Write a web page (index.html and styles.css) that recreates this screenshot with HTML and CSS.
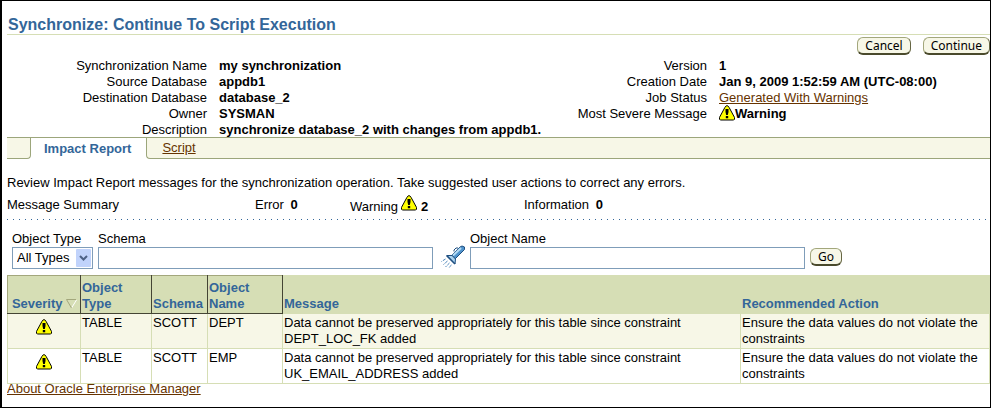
FILE: index.html
```html
<!DOCTYPE html>
<html lang="en">
<head>
    <meta charset="UTF-8">
    <meta name="viewport" content="width=device-width, initial-scale=1.0">
    <title>Synchronize: Continue To Script Execution</title>
    <link rel="stylesheet" href="styles.css">
</head>
<body>
    <svg class="symbols" aria-hidden="true">
        <symbol id="warning" viewBox="0 0 16 16">
            <path d="M7.200.8h1.600l1.400 1.800 5.300 9.800v1.800l-.8.8H1.300l-.8-.8v-1.800l5.300-9.800z" fill="#ff0" stroke="#000" stroke-width="1"/>
            <path d="M6.500 4h3v3l-.7 3H7.200l-.7-3zM6.800 11h2.400v2.200H6.800z" fill="#000"/>
        </symbol>
    </svg>

    <main class="page">
        <h1>Synchronize: Continue To Script Execution</h1>

        <div class="actions">
            <button type="button">Cancel</button>
            <button type="button">Continue</button>
        </div>

        <div class="details">
            <dl>
                <dt>Synchronization Name</dt><dd>my synchronization</dd>
                <dt>Source Database</dt><dd>appdb1</dd>
                <dt>Destination Database</dt><dd>database_2</dd>
                <dt>Owner</dt><dd>SYSMAN</dd>
                <dt>Description</dt><dd>synchronize database_2 with changes from appdb1.</dd>
            </dl>
            <dl>
                <dt>Version</dt><dd>1</dd>
                <dt>Creation Date</dt><dd>Jan 9, 2009 1:52:59 AM (UTC-08:00)</dd>
                <dt>Job Status</dt><dd><a href="#">Generated With Warnings</a></dd>
                <dt>Most Severe Message</dt><dd class="severe"><svg class="icon"><use href="#warning"/></svg>Warning</dd>
            </dl>
        </div>

        <nav class="tabs">
            <span class="edge"></span>
            <span class="active">Impact Report</span>
            <span class="rest"><a href="#">Script</a></span>
        </nav>

        <p class="intro">Review Impact Report messages for the synchronization operation. Take suggested user actions to correct any errors.</p>

        <div class="summary">
            <span>Message Summary</span>
            <span>Error <b>0</b></span>
            <span class="warnings">Warning <svg class="icon"><use href="#warning"/></svg> <b>2</b></span>
            <span>Information <b>0</b></span>
        </div>
        <hr>

        <form class="filter">
            <div class="field">
                <label for="objectType">Object Type</label>
                <div class="select">
                    <select id="objectType">
                        <option>All Types</option>
                    </select>
                    <svg class="arrow" viewBox="0 0 15 18"><path d="M4 7l3.500 3.500L11 7" fill="none" stroke="#4d6185" stroke-width="2"/></svg>
                </div>
            </div>
            <div class="field wide">
                <label for="schema">Schema</label>
                <input type="text" id="schema">
            </div>
            <button type="button" class="lookup" aria-label="Search schema">
                <svg viewBox="0 0 24 24">
                    <path d="M11 10l8-8 2-1 2.500 1v2.500L14 14z" fill="#4f93cc" stroke="#1f4f80"/>
                    <path d="M12 10.500l8-7.500" stroke="#b5dcf5" stroke-width="2"/>
                    <path d="M13 6.500V5l2-2h2" stroke="#1f4f80"/>
                    <path d="M6 10.500h5l3.500 3.500-.5 5z" fill="#a9d2ef" stroke="#1f4f80"/>
                    <path d="M5.500 10.500l8.500 8.500" stroke="#1f4f80" stroke-width="1.500"/>
                    <path d="M4.500 14l-4 2.500M6.500 16l-4 3.500M8.500 18l-4 4M10.500 20l-3 3" stroke="#4a84b8" stroke-dasharray="3 1"/>
                </svg>
            </button>
            <div class="field wide">
                <label for="objectName">Object Name</label>
                <input type="text" id="objectName">
            </div>
            <button type="button" class="go">Go</button>
        </form>

        <table>
            <colgroup>
                <col class="severity"><col class="type"><col class="schema"><col class="name"><col><col class="action">
            </colgroup>
            <thead>
                <tr>
                    <th class="sort center">Severity <svg class="order" viewBox="0 0 11 10"><path d="M10.500 1L5.500 9" stroke="#fff"/><path d="M10 .5H.5L5.500 9" fill="none" stroke="#a3a77c"/></svg></th>
                    <th class="sort">Object Type</th>
                    <th class="sort">Schema</th>
                    <th class="sort">Object Name</th>
                    <th>Message</th>
                    <th>Recommended Action</th>
                </tr>
            </thead>
            <tbody>
                <tr>
                    <td class="center"><svg class="icon"><use href="#warning"/></svg></td>
                    <td>TABLE</td>
                    <td>SCOTT</td>
                    <td>DEPT</td>
                    <td>Data cannot be preserved appropriately for this table since constraint DEPT_LOC_FK added</td>
                    <td>Ensure the data values do not violate the constraints</td>
                </tr>
                <tr>
                    <td class="center"><svg class="icon"><use href="#warning"/></svg></td>
                    <td>TABLE</td>
                    <td>SCOTT</td>
                    <td>EMP</td>
                    <td>Data cannot be preserved appropriately for this table since constraint UK_EMAIL_ADDRESS added</td>
                    <td>Ensure the data values do not violate the constraints</td>
                </tr>
            </tbody>
        </table>

        <footer><a href="#">About Oracle Enterprise Manager</a></footer>
    </main>
</body>
</html>
```

FILE: styles.css
```css
* {
    box-sizing: border-box;
}

body {
    margin: 0;
    font-family: "Liberation Sans", Arial, sans-serif;
    font-size: 13px;
    line-height: 16px;
    color: #000;
    background-color: #fff;
}

.symbols {
    display: none;
}

.page {
    min-height: 100vh;
    padding: 14px 0 0 5px;
    border: 1px solid #000;
    border-left-width: 2px;
}

h1 {
    margin: 0;
    padding-left: 1px;
    font-size: 16px;
    line-height: 19px;
    color: #336699;
    border-bottom: 1px solid #d6deb5;
}

a {
    color: #663300;
}

.icon {
    width: 16px;
    height: 16px;
}

.actions {
    display: flex;
    justify-content: flex-end;
    gap: 12px;
    padding: 2px 0 3px;
}

button {
    height: 18px;
    padding: 0 7px;
    font-family: "Noto Sans", sans-serif;
    font-size: 12px;
    line-height: 14px;
    color: #000;
    background-color: #f7f7e7;
    border: 1px solid #a3a77c;
    border-right-color: #666644;
    border-bottom: 2px solid #4a4a2c;
    border-radius: 6px;
}

.details {
    display: grid;
    grid-template-columns: minmax(0, 500fr) minmax(0, 483fr);
    height: 79px;
}

.details dl {
    display: grid;
    grid-template-columns: 200px 1fr;
    grid-auto-rows: 16px;
    column-gap: 12px;
    margin: 0;
}

.details dt {
    text-align: right;
}

.details dd {
    margin: 0;
    font-weight: bold;
    white-space: nowrap;
}

.details dd a {
    font-weight: normal;
}

.severe {
    display: flex;
}

.severe .icon {
    margin-top: -1px;
}

.tabs {
    display: flex;
    height: 22px;
    line-height: 20px;
    border-top: 1px solid #9ca67b;
}

.tabs .edge,
.tabs .rest {
    background-color: #f7f7e7;
    border-bottom: 1px solid #9ca67b;
}

.tabs .edge {
    width: 24px;
    border-right: 1px solid #9ca67b;
    border-bottom-right-radius: 4px;
}

.tabs .rest {
    flex: 1;
    padding-left: 15px;
    border-left: 1px solid #9ca67b;
    border-bottom-left-radius: 4px;
}

.tabs .active {
    padding: 0 15px 0 13px;
    line-height: 22px;
    font-weight: bold;
    color: #336699;
}

.intro {
    margin: 16px 0 6px;
}

.summary {
    display: grid;
    grid-template-columns: 248px 95px 174px 1fr;
    height: 18px;
}

.summary b {
    margin-left: 3px;
}

.warnings {
    display: flex;
    gap: 3px;
    line-height: 20px;
}

.warnings .icon {
    margin-top: -2px;
}

.warnings b {
    margin-left: 1px;
}

hr {
    height: 1px;
    margin: 4px 0 11px;
    border: 0;
    background: repeating-linear-gradient(to right, #336699 0 1px, transparent 1px 6px);
}

.filter {
    display: flex;
    align-items: flex-end;
    gap: 5px;
    padding-left: 5px;
    margin-bottom: 6px;
}

.field label {
    display: block;
}

.wide {
    flex: 0 1 335px;
}

.field input,
.select {
    display: block;
    width: 100%;
    height: 22px;
    border: 1px solid #7f9db9;
    background-color: #fff;
}

.select {
    display: grid;
    width: 81px;
}

.select select {
    grid-area: 1 / 1;
    width: 100%;
    padding: 0 0 0 4px;
    font: inherit;
    border: 0;
    background: none;
    appearance: none;
}

.arrow {
    grid-area: 1 / 1;
    justify-self: end;
    width: 15px;
    height: 18px;
    margin: 1px;
    background-color: #c1d3fb;
    border-radius: 1px;
    pointer-events: none;
}

.lookup {
    width: 24px;
    height: 24px;
    margin-left: 3px;
    padding: 0;
    border: 0;
    background: none;
}

.lookup svg {
    display: block;
    width: 24px;
    height: 24px;
    fill: none;
}

.go {
    margin-bottom: 3px;
}

table {
    width: 100%;
    table-layout: fixed;
    border-collapse: collapse;
    border: 1px solid #d6deb5;
}

.severity {
    width: 73px;
}

.type {
    width: 71px;
}

.schema {
    width: 56px;
}

.name {
    width: 75px;
}

.action {
    width: 249px;
}

th,
td {
    padding: 1px 0 1px 1px;
    text-align: left;
    vertical-align: top;
    border: 1px solid #d6deb5;
}

th {
    height: 38px;
    vertical-align: bottom;
    color: #336699;
    background-color: #d6deb5;
    border-left-color: #f7f7e7;
}

th.sort {
    border: 1px solid #444434;
    border-top-color: #a3a77c;
}

th.sort:first-child {
    border-left-color: #a3a77c;
}

tbody tr:nth-child(odd) {
    background-color: #f7f7e7;
}

.center {
    text-align: center;
}

td.center {
    padding-right: 1px;
}

td .icon {
    display: block;
    margin: 4px auto 0;
}

.order {
    width: 11px;
    height: 10px;
    vertical-align: -1px;
}

/* only the lower part of the link shows under the table */
footer {
    display: flex;
    align-items: flex-end;
    height: 13px;
    overflow: hidden;
}
```
